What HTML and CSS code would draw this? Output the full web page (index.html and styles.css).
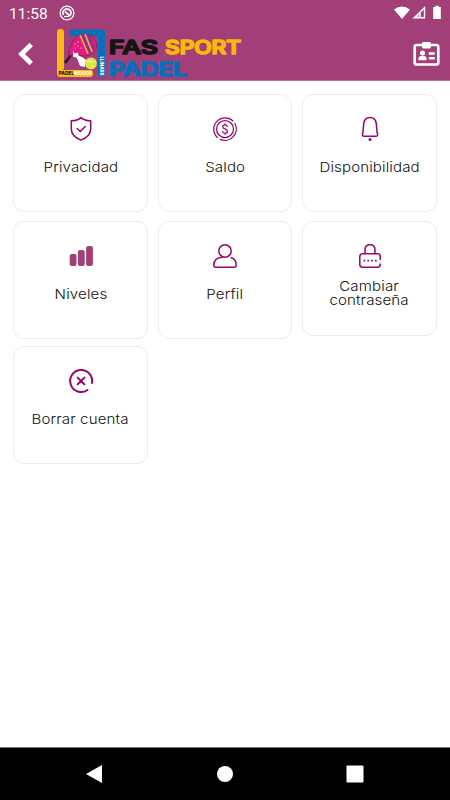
FILE: index.html
```html
<!DOCTYPE html>
<html lang="es">
<head>
<meta charset="utf-8">
<title>FAS Sport Padel</title>
<link rel="stylesheet" href="styles.css">
</head>
<body>
<div class="screen">
  <header class="top">
    <div class="status">
      <span class="time">11:58</span>
      <svg class="status-app" width="16" height="16" viewBox="0 0 16 16" fill="none" stroke="#fff"><circle cx="8" cy="8" r="6.900" stroke-width="1.300"/><path d="M4.500 10A4 4 0 1 1 11 10.500M6 6.500l5 4.500" stroke-width="1.700"/><path d="M5 11.500h5" stroke-width="1.200"/></svg>
      <svg class="signals" width="50" height="16" viewBox="0 0 50 16"><path d="M0 4.500Q8 -1.700 16 4.500L8 14z" fill="#fff"/><path d="M31.200 1v12.400H18.500z" fill="#fff"/><path d="M29.800 4.500v7.500h-3V7.500z" fill="#a23e78"/><path d="M25.500 8.800v3.300h-3.200z" fill="#a23e78" opacity=".45"/><path d="M39.200 2h2V.7h3.600V2h2v12h-7.600z" fill="#fff"/></svg>
    </div>
    <div class="bar">
      <svg class="back" width="18" height="24" viewBox="0 0 18 24" fill="none" stroke="#fff" stroke-width="4.800"><path d="M14.200 2.500L4.500 12l9.700 9.500"/></svg>
      <svg class="logo" width="190" height="54" viewBox="57 27 190 54">
        <path d="M57 32q0-3 3-3h1q3 0 3 3v38h26q3 0 3 3v1q0 3-3 3H60q-3 0-3-3z" fill="#fcb813"/>
        <path d="M69 32q0-2 3-2.500h30q3 0 3 3V74q0 3-3 3h-1q-3 0-3-3V36H72q-3 0-3-4z" fill="#0870bb"/>
        <path d="M65 63l6-8" stroke="#2b1935" stroke-width="2.800"/>
        <path d="M68.500 56q-.5-6 3-12 4-10 14-10 11 2 11.500 12-1 7-10 10-4 0-9-1-4-1-9.500 1z" fill="#e31b80" stroke="#792052" stroke-width=".7"/>
        <path d="M80 35l8 19M85 34l7 18" stroke="#f3b532" stroke-width="1.500"/>
        <path d="M82.500 34l8 19M88 34l6 15" stroke="#384fa0" stroke-width="1.400"/>
        <g fill="#fff"><circle cx="75" cy="44" r=".6"/><circle cx="78" cy="42" r=".6"/><circle cx="78" cy="46" r=".6"/><circle cx="75" cy="48" r=".6"/><circle cx="81" cy="48" r=".6"/></g>
        <path d="M73 50l1.500 3.500 3-1 1.500 3.500 3 1 4 3-1 7-5-1-3-8-4-1.500z" fill="#fff"/>
        <circle cx="91" cy="63.500" r="5.900" fill="#dce63b"/>
        <path d="M86 61.500q5-2 7 6M88 58.500q2 4 8 3" fill="none" stroke="#f5f8c7" stroke-width=".8"/>
        <text class="tiny" x="58.500" y="75.300" textLength="15.500" lengthAdjust="spacingAndGlyphs">PÀDEL</text>
        <text class="tiny light" x="74" y="75.300" textLength="18" lengthAdjust="spacingAndGlyphs">INDOOR</text>
        <text class="tiny light" transform="translate(99.800 56.500) rotate(90)" textLength="19" lengthAdjust="spacingAndGlyphs">LLINARS</text>
        <g class="brand">
          <text x="109" y="54.300" textLength="49" lengthAdjust="spacingAndGlyphs" fill="#151515" stroke="#151515">FAS</text>
          <text x="165" y="54.300" textLength="76" lengthAdjust="spacingAndGlyphs" fill="#fcb60c" stroke="#fcb60c">SPORT</text>
          <text x="109" y="76" textLength="78" lengthAdjust="spacingAndGlyphs" fill="#0870bb" stroke="#0870bb">PADEL</text>
        </g>
      </svg>
      <svg class="badge" width="28" height="26" viewBox="0 0 28 26"><rect x="1.700" y="4" width="23.600" height="19.500" rx="2" fill="none" stroke="#fff" stroke-width="2.700"/><rect x="9.200" y="1" width="8.600" height="6.500" rx="1.300" fill="#fff"/><circle cx="9.500" cy="12" r="2.500" fill="#fff"/><path d="M5.500 19.300v-2q0-2.300 4-2.600 4 .3 4 2.600v2z" fill="#fff"/><path d="M15.800 12.500h6M15.800 17.300h6" stroke="#fff" stroke-width="2.400"/></svg>
    </div>
  </header>

  <main class="grid">
    <a class="card"><svg class="icon" viewBox="0 0 24 24"><path d="M12 .6q3.500 3.200 9.700 3.200v8q0 7.500-9.700 11.300-9.700-3.800-9.700-11.300v-8q6.200 0 9.700-3.200z"/><path d="M8.200 11.500l3 3 5-5"/></svg><span class="label">Privacidad</span></a>
    <a class="card"><svg class="icon fine" viewBox="0 0 24 24"><circle cx="12" cy="12" r="8.500"/><path d="M4.300 20.500A11.400 11.400 0 0 1 20 3.900M21.900 6.500A11.400 11.400 0 0 1 7.300 22.400"/><path d="M14.300 9.500q-.3-1.700-2.300-1.700-2.200 0-2.200 1.900 0 1.700 2.200 2.200 2.400.6 2.400 2.400 0 2-2.400 2-2.200 0-2.400-1.800M12 6.800v1M12 16.300v1"/></svg><span class="label">Saldo</span></a>
    <a class="card"><svg class="icon" viewBox="0 0 24 24"><path d="M12 .6Q17.700.6 18.300 7l.8 8.500.5 1.800q.2 1.900-1.700 1.900H6.100q-1.900 0-1.700-1.900l.5-1.800L5.700 7Q6.300.6 12 .6z"/><circle class="solid" cx="12" cy="22.600" r="1.500"/></svg><span class="label">Disponibilidad</span></a>
    <a class="card"><svg class="icon bars" viewBox="0 0 24 24"><rect x=".7" y="10" width="6.800" height="12" rx="2"/><rect x="8.900" y="6" width="6.800" height="16" rx="2"/><rect x="17.100" y="1.900" width="6.800" height="20.100" rx="2"/></svg><span class="label">Niveles</span></a>
    <a class="card"><svg class="icon" viewBox="0 0 24 24"><circle cx="12" cy="7" r="6.200"/><path d="M9.500 13.300Q.8 13.800.8 21.200q0 2 2 2h18.400q2 0 2-2 0-6.300-5-7.400"/></svg><span class="label">Perfil</span></a>
    <a class="card short"><svg class="icon" viewBox="0 0 24 24"><path d="M7 9.800V6Q7 .8 12 .8T17 6v3.800M22.200 15.500V12.500q0-2.700-2.700-2.700h-15q-2.700 0-2.700 2.700v8q0 2.700 2.700 2.700h15q2.700 0 2.700-2.700v-.5"/><path class="dots" d="M5.600 16.600h13.500"/></svg><span class="label">Cambiar<br>contraseña</span></a>
    <a class="card"><svg class="icon bold" viewBox="0 0 24 24"><path d="M18.500 21A11 11 0 1 1 23 14"/><path d="M8.600 8.600l6.800 6.800M15.400 8.600l-6.800 6.800"/></svg><span class="label">Borrar cuenta</span></a>
  </main>

  <nav class="nav">
    <svg width="18" height="20" viewBox="0 0 18 20"><path d="M1 10L17 1v18z" fill="#fff"/></svg>
    <svg width="18" height="18" viewBox="0 0 18 18"><circle cx="9" cy="9" r="8" fill="#fff"/></svg>
    <svg width="18" height="18" viewBox="0 0 18 18"><rect x=".5" y=".5" width="17" height="17" rx="1" fill="#fff"/></svg>
  </nav>
</div>
</body>
</html>
```
FILE: styles.css
```css
* { box-sizing: border-box; }
body { margin: 0; background: #fff; }
.screen { width: 450px; height: 800px; display: flex; flex-direction: column; overflow: hidden; }

.top { height: 81px; background: #a23e78; border-bottom: 1px solid #b96a98; flex: none; }
.status { height: 27px; display: flex; align-items: center; padding: 0 6px 0 9px; color: #fff; }
.time { font: 400 15.5px/27px Roboto, sans-serif; width: 50px; padding-top: 1px; }
.status-app { margin-top: -1px; }
.signals { margin-left: auto; margin-top: -1px; }
.bar { height: 53px; display: flex; align-items: center; }
.back { margin-left: 17px; }
.logo { margin-left: 22px; }
.badge { margin: 0 9px 0 auto; }
.brand { font: 500 18.5px Inter, sans-serif; stroke-width: 1.7px; stroke-linejoin: round; }
.tiny { font: 800 5px Inter, sans-serif; fill: #151515; }
.light { fill: #fff; }

.grid {
  flex: 1;
  display: grid;
  grid-template-columns: repeat(3, 134.5px);
  grid-template-rows: 118px 118px 118px;
  gap: 8px 10px;
  padding: 13px 13px 0;
  align-items: start;
}
.card {
  height: 118px;
  border: 1px solid #ededed;
  border-radius: 11px;
  display: flex;
  flex-direction: column;
  align-items: center;
  padding: 22px 0 0 .5px;
}
.card:nth-child(n+4):nth-child(-n+6) { margin-top: 1px; }
.short { height: 115px; }
.icon { width: 24px; height: 24px; flex: none; fill: none; stroke: #99056b; stroke-width: 1.5px; stroke-linecap: round; stroke-linejoin: round; overflow: visible; }
.icon .solid { fill: #99056b; stroke: none; }
.fine { stroke-width: 1.25px; }
.bold { stroke-width: 2px; }
.bars { fill: #a23e78; stroke: none; }
.dots { stroke-width: 1.7px; stroke-linecap: butt; stroke-dasharray: 1.7px 2.1px; }
.label { margin-top: 18px; font: 300 13.7px/17px Inter, sans-serif; color: #111; text-align: center; white-space: nowrap; letter-spacing: .12px; transform: scaleX(1.1); }
.short .label { line-height: 14px; margin-top: 11px; }

.nav { height: 53px; flex: none; background: #000; border-top: 1px solid #777; display: flex; align-items: center; justify-content: space-between; padding: 0 86px 0 85px; }
```
